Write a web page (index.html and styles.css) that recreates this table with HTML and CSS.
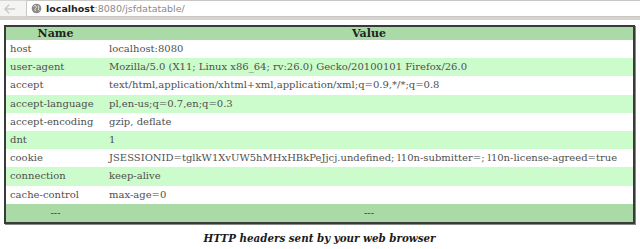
FILE: index.html
```html
<!DOCTYPE html>
<html>
<head>
<meta charset="utf-8">
<link rel="stylesheet" href="styles.css">
</head>
<body>
<div class="chrome">
  <div class="back">
    <svg width="14" height="12" viewBox="0 0 14 12"><path d="M6 1 L1 6 L6 11 M1 6 H13" fill="none" stroke="#c8c8c8" stroke-width="1.6"/></svg>
  </div>
  <div class="urlbar">
    <svg class="globe" width="11" height="11" viewBox="0 0 11 11"><circle cx="5.5" cy="5.5" r="4.8" fill="#8a8a8a"/><path d="M2.5 3.5 Q4 2 5 3 Q6 4.5 4.5 5.5 Q3.5 6.5 4.5 8 M7 2.5 Q8.5 4 7.5 5.5 Q7 7 8.5 7.5" fill="none" stroke="#e6e6e6" stroke-width="1"/></svg>
    <span class="host">localhost</span><span class="path">:8080/jsfdatatable/</span>
  </div>
</div>
<div class="page">
  <table class="headers">
    <colgroup><col class="c-name"><col class="c-val"></colgroup>
    <thead>
      <tr><th>Name</th><th>Value</th></tr>
    </thead>
    <tbody>
      <tr><td>host</td><td>localhost:8080</td></tr>
      <tr class="alt"><td>user-agent</td><td>Mozilla/5.0 (X11; Linux x86_64; rv:26.0) Gecko/20100101 Firefox/26.0</td></tr>
      <tr><td>accept</td><td>text/html,application/xhtml+xml,application/xml;q=0.9,*/*;q=0.8</td></tr>
      <tr class="alt"><td>accept-language</td><td>pl,en-us;q=0.7,en;q=0.3</td></tr>
      <tr><td>accept-encoding</td><td>gzip, deflate</td></tr>
      <tr class="alt"><td>dnt</td><td>1</td></tr>
      <tr><td>cookie</td><td>JSESSIONID=tglkW1XvUW5hMHxHBkPeJjcj.undefined; l10n-submitter=; l10n-license-agreed=true</td></tr>
      <tr class="alt"><td>connection</td><td>keep-alive</td></tr>
      <tr><td>cache-control</td><td>max-age=0</td></tr>
    </tbody>
    <tfoot>
      <tr><td class="foot">---</td><td class="foot">---</td></tr>
    </tfoot>
  </table>
  <p class="caption">HTTP headers sent by your web browser</p>
</div>
</body>
</html>
```
FILE: styles.css
```css
html, body {
  margin: 0;
  padding: 0;
  background: #ffffff;
}
.chrome {
  height: 15px;
  display: flex;
  align-items: center;
  gap: 10px;
  padding-left: 4px;
  background: #f4f4f2;
  border-top: 1px solid #d8d6d2;
  border-bottom: 4px solid #d6d3cf;
  box-sizing: content-box;
}
.back {
  width: 12px;
  display: flex;
  align-items: center;
}
.urlbar {
  flex: 1;
  height: 15px;
  display: flex;
  align-items: center;
  gap: 3px;
  padding-left: 4px;
  background: #ffffff;
  border: 1px solid #c9c7c3;
  border-right: none;
  border-radius: 2px 0 0 2px;
  font-family: "DejaVu Sans", sans-serif;
  font-size: 9.5px;
}
.globe { margin-right: 1px; }
.host { color: #222; font-weight: bold; }
.path { color: #8a8a8a; margin-left: -3px; }
.page {
  padding: 5px 5px 0 4px;
}
.headers {
  width: 631px;
  table-layout: fixed;
  border-collapse: collapse;
  border: 2px solid #3a3a3a;
  box-shadow: 1px 1px 0 #888;
  font-family: "DejaVu Serif", serif;
  font-size: 10px;
  color: #4f4f4f;
}
.c-name { width: 100px; }
.headers th {
  background: #aadba6;
  color: #222;
  font-weight: bold;
  font-size: 11px;
  height: 13px;
  padding: 0;
  line-height: 13px;
}
.headers td {
  height: 18.2px;
  padding: 0 0 0 4px;
  line-height: 14px;
  white-space: nowrap;
  overflow: hidden;
}
.headers tbody tr { background: #ffffff; }
.headers tbody tr.alt { background: #ccfccb; }
.headers tfoot tr { background: #aadba6; }
.headers td.foot {
  text-align: center;
  padding: 0;
  color: #333;
  height: 18px;
}
.caption {
  margin: 8px 0 0 0;
  text-align: center;
  font-family: "DejaVu Serif", serif;
  font-weight: bold;
  font-style: italic;
  font-size: 10.3px;
  color: #1a1a1a;
}
```
